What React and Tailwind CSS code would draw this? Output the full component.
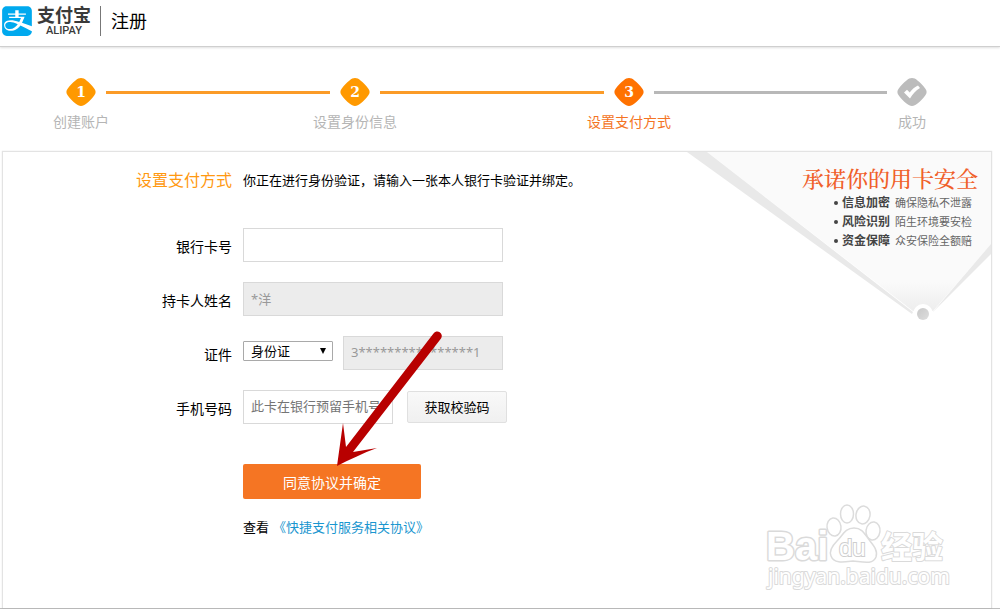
import React from "react";
import { FaAlipay } from "react-icons/fa";

const steps = [
  { label: "创建账户", mark: "1", fill: "#ff9900", text: "text-[#b5b5b5]" },
  { label: "设置身份信息", mark: "2", fill: "#ff9900", text: "text-[#b5b5b5]" },
  { label: "设置支付方式", mark: "3", fill: "#ff7200", text: "text-[#f47424]" },
  { label: "成功", mark: null, fill: "#bcbcbc", text: "text-[#b5b5b5]" },
];

const lines = [
  "flex-[224] bg-[#fb9b28]",
  "flex-[224] bg-[#fb9b28]",
  "flex-[233] bg-[#b8b8b8]",
];

const promises = [
  ["信息加密", "确保隐私不泄露"],
  ["风险识别", "陌生环境要安检"],
  ["资金保障", "众安保险全额赔"],
];

function Header() {
  return (
    <header className="flex h-[47px] items-start border-b border-[#cfcfcf] pl-0.5 pt-1.5 shadow-[0_1px_2px_rgba(0,0,0,0.12)]">
      <a href="#home" className="flex h-[30px] items-center text-[#3a3a3a]">
        <FaAlipay className="h-[34px] w-[30px] text-[#00a9ee]" />
        <span className="ml-1 flex w-14 flex-col items-center">
          <span className="text-[18px] font-bold leading-[20px]">支付宝</span>
          <span className="font-['Roboto'] text-[11px] font-medium leading-[12px]">ALIPAY</span>
        </span>
      </a>
      <h1 className="ml-2 flex h-[30px] items-center border-l border-[#777] pl-2.5 text-[18px] leading-[30px]">
        注册
      </h1>
    </header>
  );
}

function Step({ step }) {
  return (
    <li className="flex w-[50px] flex-none flex-col items-center">
      <span className="grid h-7 w-[30px] place-items-center">
        <svg viewBox="0 0 30 28" className="col-start-1 row-start-1 h-7 w-[30px]" aria-hidden="true">
          <path
            d="M15 0C17 0 18.5 .7 20.5 2.4C23.5 4.8 26 7.2 28.2 10.4C30.1 13 30.1 15 28.2 17.6C26 20.8 23.5 23.2 20.5 25.6C18.5 27.3 17 28 15 28C13 28 11.500 27.300 9.500 25.600C6.500 23.200 4 20.800 1.800 17.600C-.1 15 -.1 13 1.800 10.400C4 7.200 6.500 4.800 9.500 2.400C11.500 .7 13 0 15 0Z"
            fill={step.fill}
          />
          {!step.mark && (
            <path d="M7 14.500L10 11.800L12.700 14.500C15 11.400 18 9 21 7.600L23 9.900C18.800 12.300 15.800 15.800 13 20.500Z" fill="#fff" />
          )}
        </svg>
        {step.mark && (
          <span className="col-start-1 row-start-1 font-['DejaVu_Serif'] text-[14px] font-bold leading-[28px] text-white">
            {step.mark}
          </span>
        )}
      </span>
      <span className={"mt-1.5 whitespace-nowrap text-[14px] leading-[20px] " + step.text}>{step.label}</span>
    </li>
  );
}

function Steps() {
  return (
    <ol className="flex h-[104px] items-start pl-14 pr-[63px] pt-[31px]">
      {steps.map((step, i) => (
        <React.Fragment key={step.label}>
          <Step step={step} />
          {i < 3 && <li aria-hidden="true" className={"mt-[13px] h-[3px] " + lines[i]} />}
        </React.Fragment>
      ))}
    </ol>
  );
}

function SafetyBanner() {
  return (
    <aside className="absolute right-0 top-0 h-[176px] w-[305px]">
      <svg viewBox="0 0 305 176" className="absolute inset-0 h-full w-full" aria-hidden="true">
        <defs>
          <linearGradient id="sheet" x1="0" y1="0" x2="0" y2="1">
            <stop offset="0" stopColor="#fafafa" />
            <stop offset=".82" stopColor="#fafafa" />
            <stop offset="1" stopColor="#ededed" />
          </linearGradient>
          <linearGradient id="knob" x1="0" y1="0" x2="1" y2="1">
            <stop offset="0" stopColor="#c8c8c8" />
            <stop offset="1" stopColor="#dedede" />
          </linearGradient>
        </defs>
        <path d="M21 0H305V92L247 159H227Z" fill="url(#sheet)" />
        <path d="M1 0H21L227 160L226 162Z" fill="#e9e9e9" />
        <path d="M305 92V102L246 161Z" fill="#e9e9e9" />
        <circle cx="237" cy="162" r="10" fill="#fff" />
        <circle cx="237" cy="162" r="6" fill="url(#knob)" />
      </svg>
      <div className="relative flex flex-col items-end pr-[19px] pt-[11px]">
        <h2 className="-mr-1.5 font-['Noto_Serif_CJK_SC','Noto_Sans_CJK_SC',serif] text-[22px] font-medium leading-[30px] text-[#f0602a]">
          承诺你的用卡安全
        </h2>
        <ul className="text-[#444]">
          {promises.map(([name, text]) => (
            <li key={name} className="flex h-[19px] items-center">
              <span className="mr-1 h-1 w-1 rounded-full bg-[#444]" />
              <strong className="text-[12px] leading-[19px]">{name}</strong>
              <span className="ml-[5px] text-[11px] leading-[19px] text-[#666]">{text}</span>
            </li>
          ))}
        </ul>
      </div>
    </aside>
  );
}

function Row({ label, id, children }) {
  return (
    <div className="flex h-[34px] items-center">
      <label htmlFor={id} className="mr-[11px] w-[229px] flex-none pt-1 text-right text-[14px] leading-[20px]">
        {label}
      </label>
      {children}
    </div>
  );
}

function Watermark() {
  return (
    <svg viewBox="0 0 190 90" className="pointer-events-none absolute bottom-[17px] right-[39px] h-[90px] w-[190px]">
      <g fill="#fff" stroke="#dadada" strokeWidth="3" paintOrder="stroke" strokeLinejoin="round">
        <text x="4" y="59" className="font-['Liberation_Sans'] text-[40px] font-bold">Bai</text>
        <text x="119" y="57" strokeWidth="2" className="font-['Noto_Sans_CJK_SC'] text-[31px] font-bold">经验</text>
        <text x="6" y="83" strokeWidth="2" className="font-['Noto_Sans'] text-[21px]">jingyan.baidu.com</text>
      </g>
      <g fill="#fff" stroke="#dcdcdc" strokeWidth="1.500">
        <ellipse cx="72" cy="26" rx="7" ry="9" transform="rotate(-8 72 26)" />
        <ellipse cx="85" cy="13" rx="6.500" ry="9" />
        <ellipse cx="101" cy="14" rx="7" ry="9" transform="rotate(10 101 14)" />
        <ellipse cx="111" cy="30" rx="7" ry="9" transform="rotate(8 111 30)" />
        <path d="M92 27C83 27 81 34 75 40C70 45 67 50 69 55C72 63 82 61 91 60C101 61 111 64 114 56C116 50 112 45 108 40C103 34 101 27 92 27Z" />
      </g>
      <text x="77" y="55" fill="#fff" stroke="#cecece" strokeWidth="2" paintOrder="stroke" className="font-['Liberation_Sans'] text-[24px]">du</text>
    </svg>
  );
}

function Pointer() {
  return (
    <svg viewBox="0 0 110 140" className="pointer-events-none h-[140px] w-[110px]" aria-hidden="true">
      <path d="M3 136L9 93L12 117L99.500 3.500A4.200 4.200 0 0 1 107 8.500L19 122L43 118C29 123 15 130 3 136Z" fill="#b80000" />
    </svg>
  );
}

const field = "h-[34px] rounded-none border border-[#d9d9d9] px-[7px] pb-0.5 text-[13px] outline-none";

export default function App() {
  return (
    <div className="flex min-h-screen flex-col bg-white pb-[3px] font-['Noto_Sans','Noto_Sans_CJK_SC',sans-serif] text-black">
      <Header />
      <Steps />
      <main className="flex flex-1 flex-col border-b border-[#bdbdbd] pl-0.5 pr-2">
        <section className="relative flex-1 border-x border-t border-[#e3e3e3] pb-[68px] shadow-[0_0_1px_rgba(0,0,0,0.15)]">
          <SafetyBanner />
          <div className="relative flex items-center pt-[15px]">
            <h2 className="mr-[11px] w-[229px] flex-none text-right text-[16px] leading-[26px] text-[#ff9911]">设置支付方式</h2>
            <p className="text-[13px] leading-[26px]">你正在进行身份验证，请输入一张本人银行卡验证并绑定。</p>
          </div>
          <form className="relative mt-[35px]" onSubmit={(e) => e.preventDefault()}>
            <div className="flex flex-col gap-5">
              <Row label="银行卡号" id="card">
                <input id="card" className={field + " w-[260px] bg-white"} />
              </Row>
              <Row label="持卡人姓名" id="holder">
                <input id="holder" disabled defaultValue="*洋" className={field + " w-[260px] bg-[#ececec] text-[#999]"} />
              </Row>
              <Row label="证件" id="idtype">
                <span className="relative mb-1 mr-2.5 block h-5 w-[90px]">
                  <select
                    id="idtype"
                    className="block h-5 w-full appearance-none rounded-[1px] border border-[#a9a9a9] bg-white pl-[7px] text-[13px] leading-[18px]"
                  >
                    <option>身份证</option>
                  </select>
                  <svg viewBox="0 0 6 6" className="pointer-events-none absolute right-[7px] top-[7px] h-1.5 w-1.5" aria-hidden="true">
                    <path d="M0 0H6L3 6Z" fill="#000" />
                  </svg>
                </span>
                <input
                  aria-label="证件号码"
                  disabled
                  defaultValue="3****************1"
                  className={field + " w-[160px] bg-[#ececec] text-[#999]"}
                />
              </Row>
              <Row label="手机号码" id="phone">
                <input
                  id="phone"
                  placeholder="此卡在银行预留手机号"
                  className={field + " mr-3.5 w-[150px] bg-white placeholder:text-[#757575]"}
                />
                <button type="button" className="h-8 w-[100px] rounded-[2px] border border-[#e0e0e0] bg-linear-to-b from-[#f9f9f9] to-[#f0f0f0] pt-0.5 text-[13px]">
                  获取校验码
                </button>
              </Row>
            </div>
            <div className="pl-60 pt-10">
              <div className="relative w-[178px]">
                <button type="submit" className="block h-[35px] w-full rounded-[2px] bg-[#f57523] pt-0.5 text-[14px] text-white">
                  同意协议并确定
                </button>
                <span className="absolute -top-[134px] left-[91px]">
                  <Pointer />
                </span>
              </div>
              <p className="mt-[18px] flex gap-1 text-[13px] leading-[20px]">
                查看
                <a href="#agreement" className="text-[#1a96cf]">《快捷支付服务相关协议》</a>
              </p>
            </div>
          </form>
          <Watermark />
        </section>
      </main>
    </div>
  );
}
